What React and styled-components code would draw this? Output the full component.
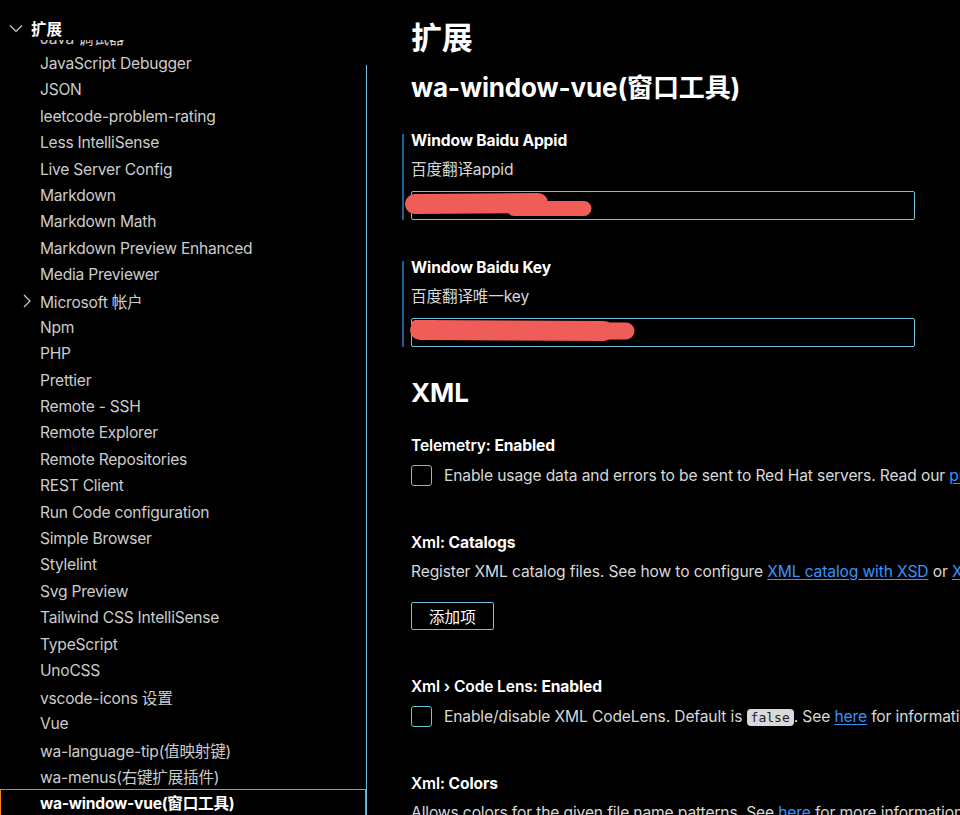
import styled, { createGlobalStyle } from "styled-components";

const GlobalStyle = createGlobalStyle`
  html, body {
    margin: 0;
    padding: 0;
    background: #000;
    overflow: hidden;
  }
  body {
    font-family: Inter, "Noto Sans", "Noto Sans CJK SC", sans-serif;
    -webkit-font-smoothing: antialiased;
  }
`;

const tocItems = [
  { label: "Java 调试器" },
  { label: "JavaScript Debugger" },
  { label: "JSON" },
  { label: "leetcode-problem-rating" },
  { label: "Less IntelliSense" },
  { label: "Live Server Config" },
  { label: "Markdown" },
  { label: "Markdown Math" },
  { label: "Markdown Preview Enhanced" },
  { label: "Media Previewer" },
  { label: "Microsoft 帐户", collapsed: true },
  { label: "Npm" },
  { label: "PHP" },
  { label: "Prettier" },
  { label: "Remote - SSH" },
  { label: "Remote Explorer" },
  { label: "Remote Repositories" },
  { label: "REST Client" },
  { label: "Run Code configuration" },
  { label: "Simple Browser" },
  { label: "Stylelint" },
  { label: "Svg Preview" },
  { label: "Tailwind CSS IntelliSense" },
  { label: "TypeScript" },
  { label: "UnoCSS" },
  { label: "vscode-icons 设置" },
  { label: "Vue" },
  { label: "wa-language-tip(值映射键)" },
  { label: "wa-menus(右键扩展插件)" },
  { label: "wa-window-vue(窗口工具)", selected: true },
];

const ChevronDown = () => (
  <svg width="16" height="16" viewBox="0 0 16 16" fill="none">
    <path d="M2 5.5L8 11.5L14 5.5" stroke="#cccccc" strokeWidth="1.2" />
  </svg>
);

const ChevronRight = () => (
  <svg width="16" height="16" viewBox="0 0 16 16" fill="none">
    <path d="M5 2L11 8L5 14" stroke="#cccccc" strokeWidth="1.2" />
  </svg>
);

// red redaction marks painted over the input values
const Scribble = ({ strokes }) => (
  <RedactSvg width="260" height="40" viewBox="0 0 260 40">
    {strokes.map((s, i) => (
      <path
        key={i}
        d={s.d}
        stroke="#f05d58"
        strokeWidth={s.w}
        strokeLinecap="round"
        fill="none"
      />
    ))}
  </RedactSvg>
);

const App = () => {
  return (
    <>
      <GlobalStyle />
      <Layout>
        <Sidebar>
          <TocHeader>
            <ChevronDown />
            <span>扩展</span>
          </TocHeader>
          <TocList>
            {tocItems.map((item) => (
              <TocRow key={item.label} $selected={item.selected}>
                <Twisty>{item.collapsed && <ChevronRight />}</Twisty>
                <span>{item.label}</span>
              </TocRow>
            ))}
          </TocList>
        </Sidebar>

        <Main>
          <PageTitle>扩展</PageTitle>
          <SectionTitle $top={13}>wa-window-vue(窗口工具)</SectionTitle>

          <Item $top={25} $modified>
            <ItemTitle>Window Baidu Appid</ItemTitle>
            <Desc>百度翻译appid</Desc>
            <InputBox>
              <Scribble
                strokes={[
                  { d: "M11 14 L134 13", w: 20 },
                  { d: "M110 18.5 L180 18.5", w: 15 },
                ]}
              />
            </InputBox>
          </Item>

          <Item $top={37} $modified>
            <ItemTitle>Window Baidu Key</ItemTitle>
            <Desc>百度翻译唯一key</Desc>
            <InputBox>
              <Scribble
                strokes={[
                  { d: "M16 13 L200 14", w: 20 },
                  { d: "M190 14 L222 14", w: 17 },
                  { d: "M12 8 L30 8", w: 10 },
                ]}
              />
            </InputBox>
          </Item>

          <SectionTitle $top={29}>XML</SectionTitle>

          <Item $top={25}>
            <ItemTitle>
              <Category>Telemetry: </Category>Enabled
            </ItemTitle>
            <CheckRow>
              <Checkbox />
              <span>
                Enable usage data and errors to be sent to Red Hat servers. Read
                our <Link>privacy statement</Link>.
              </span>
            </CheckRow>
          </Item>

          <Item $top={45}>
            <ItemTitle>
              <Category>Xml: </Category>Catalogs
            </ItemTitle>
            <Desc>
              Register XML catalog files. See how to configure{" "}
              <Link>XML catalog with XSD</Link> or{" "}
              <Link>XML catalog with DTD</Link> for more information.
            </Desc>
            <Button>添加项</Button>
          </Item>

          <Item $top={46}>
            <ItemTitle>
              <Category>Xml › Code Lens: </Category>Enabled
            </ItemTitle>
            <CheckRow>
              <Checkbox />
              <span>
                Enable/disable XML CodeLens. Default is <Code>false</Code>. See{" "}
                <Link>here</Link> for information about the CodeLens.
              </span>
            </CheckRow>
          </Item>

          <Item $top={45}>
            <ItemTitle>
              <Category>Xml: </Category>Colors
            </ItemTitle>
            <Desc>
              Allows colors for the given file name patterns. See{" "}
              <Link>here</Link> for more information.
            </Desc>
          </Item>
        </Main>
      </Layout>
    </>
  );
};

export default App;

const Layout = styled.div`
  display: flex;
  height: 815px;
  overflow: hidden;
  background: #000;
`;

const Sidebar = styled.nav`
  position: relative;
  flex: 0 0 367px;
  height: 100%;
  overflow: hidden;

  &::after {
    content: "";
    position: absolute;
    top: 65px;
    bottom: 0;
    right: 0;
    width: 1px;
    background: #6fc3df;
  }
`;

const TocHeader = styled.div`
  position: relative;
  z-index: 1;
  display: flex;
  align-items: center;
  gap: 7px;
  height: 24px;
  padding: 16px 0 0 8px;
  background: #000;
  color: #ffffff;
  font-size: 15.6px;
  font-weight: 600;
`;

const TocList = styled.div`
  width: 366px;
  margin-top: -16.6px;
`;

const TocRow = styled.div`
  display: flex;
  align-items: center;
  gap: 5px;
  height: 26.4px;
  padding-left: 18px;
  box-sizing: border-box;
  font-size: 15.6px;
  letter-spacing: -0.24px;
  white-space: nowrap;
  color: ${(p) => (p.$selected ? "#ffffff" : "#cccccc")};
  font-weight: ${(p) => (p.$selected ? 700 : 400)};
  border: 1px solid ${(p) => (p.$selected ? "#f38518" : "transparent")};
  border-bottom: none;
`;

const Twisty = styled.span`
  display: flex;
  width: 16px;
  height: 16px;
`;

const Main = styled.main`
  flex: 1;
  min-width: 0;
  overflow: hidden;
  padding: 18px 0 0 44px;
  color: #ffffff;
  white-space: nowrap;
  letter-spacing: -0.13px;
`;

const PageTitle = styled.h1`
  margin: 0;
  font-size: 31px;
  line-height: 40px;
  font-weight: 700;
`;

const SectionTitle = styled.h2`
  margin: ${(p) => p.$top}px 0 0;
  font-size: 26px;
  line-height: 34px;
  font-weight: 700;
`;

const Item = styled.section`
  position: relative;
  margin-top: ${(p) => p.$top}px;

  &::before {
    content: "";
    display: ${(p) => (p.$modified ? "block" : "none")};
    position: absolute;
    left: -9px;
    top: 4px;
    bottom: 0;
    width: 2px;
    background: #1c5f91;
  }
`;

const ItemTitle = styled.div`
  font-size: 15.6px;
  line-height: 22px;
  font-weight: 700;
  color: #ffffff;
`;

const Category = styled.span`
  font-weight: 600;
`;

const Desc = styled.div`
  margin-top: 7px;
  font-size: 15.6px;
  line-height: 22px;
  color: #d8d8d8;
`;

const InputBox = styled.div`
  position: relative;
  margin-top: 10px;
  width: 504px;
  height: 29px;
  box-sizing: border-box;
  border: 1px solid #6fc3df;
  border-radius: 2px;
`;

const RedactSvg = styled.svg`
  position: absolute;
  left: -8px;
  top: -2px;
`;

const CheckRow = styled.div`
  display: flex;
  align-items: center;
  gap: 12px;
  margin-top: 7px;
  height: 23px;
  font-size: 15.6px;
  color: #d8d8d8;
`;

const Checkbox = styled.span`
  flex: 0 0 auto;
  width: 21px;
  height: 21px;
  box-sizing: border-box;
  border: 1px solid #6fc3df;
  border-radius: 3px;
`;

const Link = styled.a`
  color: #3794ff;
  text-decoration: underline;
  text-underline-offset: 2px;
`;

const Code = styled.code`
  font-family: "DejaVu Sans Mono", "Liberation Mono", monospace;
  font-size: 13px;
  letter-spacing: 0;
  color: #1e1e1e;
  background: #d9d9d9;
  border-radius: 4px;
  padding: 1px 4px;
`;

const Button = styled.button`
  display: block;
  margin-top: 19px;
  height: 28px;
  padding: 0 17px;
  background: transparent;
  color: #ffffff;
  border: 1px solid #6fc3df;
  border-radius: 2px;
  font-family: inherit;
  font-size: 15.6px;
`;
